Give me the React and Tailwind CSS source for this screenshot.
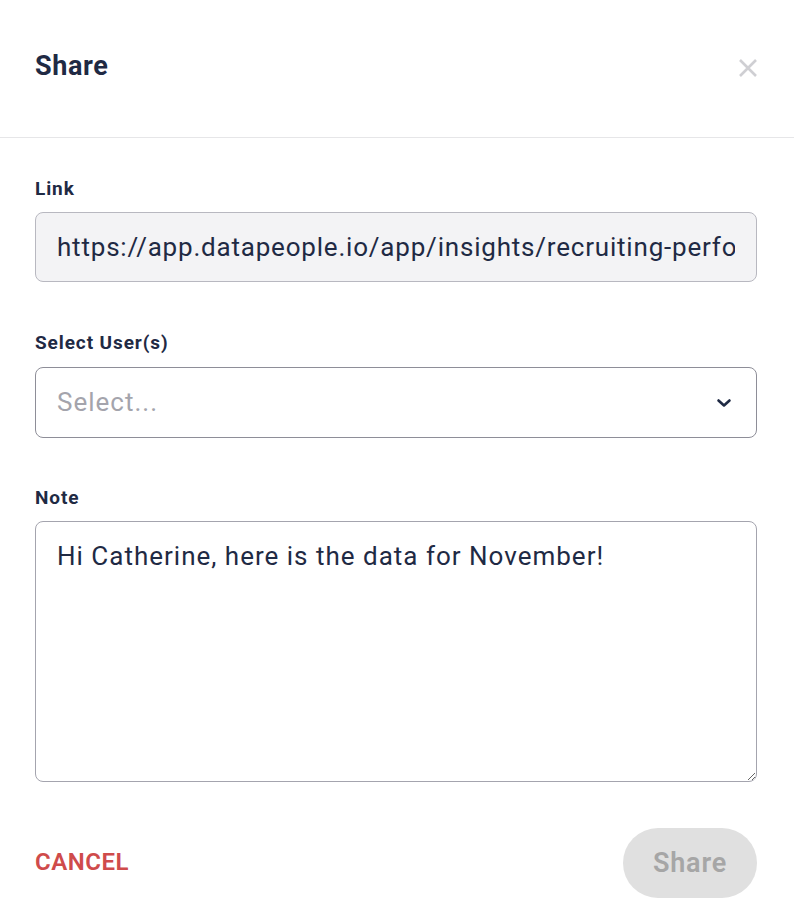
import React, { useState } from 'react';

const ShareDialog = () => {
  const [note, setNote] = useState('Hi Catherine, here is the data for November!');
  const font = { fontFamily: 'Roboto, "Liberation Sans", sans-serif' };

  return (
    <div className="w-[794px] h-[924px] bg-white text-[#1f2a44]" style={font}>
      {/* Header */}
      <div className="flex items-center justify-between pl-[35px] pr-[36px] h-[138px] border-b border-[#e6e6e8]">
        <h2 className="text-[27px] font-bold tracking-[0.6px] -mt-[4px]">Share</h2>
        <button className="text-[#cfcfd3] -mt-[2px]">
          <svg width="20" height="20" viewBox="0 0 20 20" fill="none" stroke="currentColor" strokeWidth="2.6" strokeLinecap="butt">
            <path d="M2 2 L18 18 M18 2 L2 18" />
          </svg>
        </button>
      </div>

      {/* Body */}
      <div className="pl-[35px] pr-[37px] pt-[39px]">
        <label className="block text-[19px] font-bold leading-[24px] mb-[11px] tracking-[0.9px]">Link</label>
        <input
          readOnly
          value="https://app.datapeople.io/app/insights/recruiting-performance"
          className="block w-full h-[70px] rounded-[8px] border border-[#b8b8c0] bg-[#f3f3f5] px-[21px] text-[26px] tracking-[0.8px] text-[#1f2a44] outline-none"
          style={font}
        />

        <label className="block text-[19px] font-bold leading-[24px] mt-[49px] mb-[12px] tracking-[0.9px]">Select User(s)</label>
        <div className="h-[71px] rounded-[8px] border border-[#8e8e98] bg-white pl-[21px] pr-[24px] flex items-center justify-between">
          <span className="text-[26px] text-[#a4a4ac] tracking-[1px]">Select...</span>
          <svg width="16" height="10" viewBox="0 0 16 10" fill="none" stroke="#1f2a44" strokeWidth="2.6" strokeLinecap="round" strokeLinejoin="round">
            <path d="M2.5 2.5 L8 7.5 L13.5 2.5" />
          </svg>
        </div>

        <label className="block text-[19px] font-bold leading-[24px] mt-[48px] mb-[11px] tracking-[0.9px]">Note</label>
        <textarea
          value={note}
          onChange={(e) => setNote(e.target.value)}
          className="block w-full h-[261px] rounded-[8px] border border-[#a4a4ae] bg-white px-[21px] pt-[17px] text-[26px] leading-[34px] tracking-[1px] text-[#1f2a44] outline-none"
          style={font}
        />

        {/* Footer */}
        <div className="flex items-center justify-between mt-[46px]">
          <button className="text-[24px] font-semibold text-[#cf4b4b] tracking-[0.5px] -mt-[2px]">CANCEL</button>
          <button className="w-[134px] h-[70px] rounded-full bg-[#e0e0e0] text-[#a6a6a6] text-[27px] font-semibold tracking-[0.8px]">Share</button>
        </div>
      </div>
    </div>
  );
};

export default function App() {
  return <ShareDialog />;
}
